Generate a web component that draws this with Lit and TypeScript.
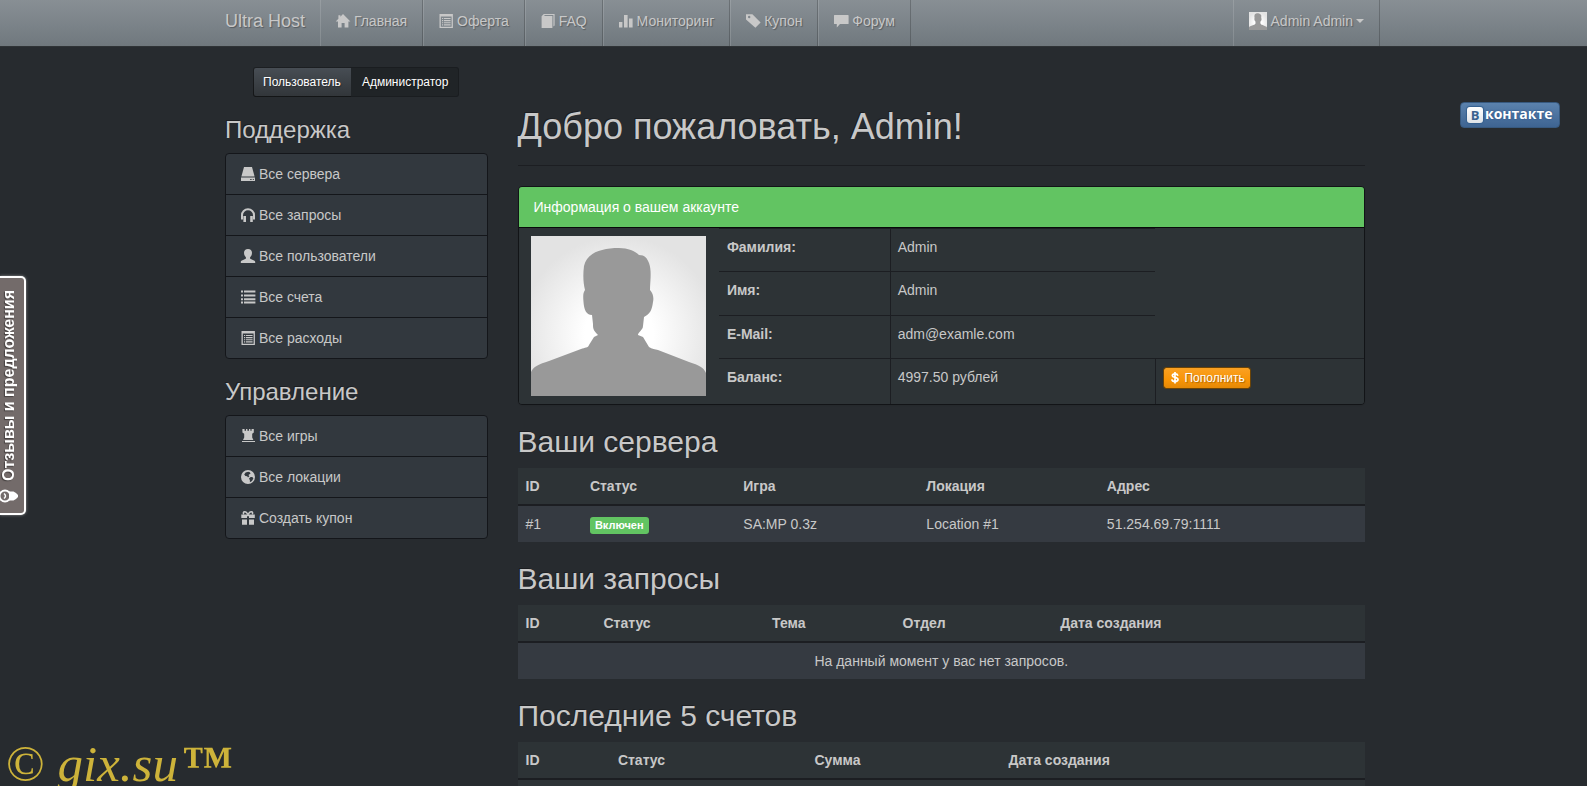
import { LitElement, html, css, svg, nothing } from "lit";
import { customElement, property } from "lit/decorators.js";

const GLYPHS: Record<string, unknown> = {
  home: svg`<path d="M7 0 14.4 7.4H12.4V13.6H8.6V9H5.6V13.6H2V7.4H-0.3L2.4 4.7V1.2H4.4V2.7Z"/>`,
  listAlt: svg`<path fill-rule="evenodd" d="M0.5 0H13.9V14H0.5ZM1.8 2.6V12.7H12.6V2.6Z"/><path d="M3 4H4.2V5.1H3ZM5 4H11.6V5.1H5ZM3 6.1H4.2V7.2H3ZM5 6.1H11.6V7.2H5ZM3 8.2H4.2V9.3H3ZM5 8.2H11.6V9.3H5ZM3 10.3H4.2V11.4H3ZM5 10.3H11.6V11.4H5Z"/>`,
  book: svg`<path d="M0.6 2.2 2.8 0H13.6V11.6L12.4 12.6V1H4L2.9 2H11.4V14H0.6Z"/>`,
  stats: svg`<path d="M0 8H3.4V13.6H0ZM5 1H8.6V13.6H5ZM10 4.6H13.6V13.6H10Z"/>`,
  tag: svg`<path fill-rule="evenodd" d="M0 0.3H6.4L14.6 8.4 9.4 13.7 0 5.6ZM3.2 1.8A1.2 1.2 0 1 0 3.2 4.2 1.2 1.2 0 0 0 3.2 1.8Z"/>`,
  comment: svg`<path d="M0.5 1H14Q14.6 1 14.6 1.6V9.4Q14.6 10 14 10H6L2.8 13.5V10H0.5Q0 10 0 9.4V1.6Q0 1 0.5 1Z"/>`,
  hdd: svg`<path d="M3 0H11L13.6 9.6H0.4Z"/><path fill-rule="evenodd" d="M0 10.6H14V14H0ZM9.2 12V13H10.6V12ZM11.8 12V13H12.8V12Z"/>`,
  headphones: svg`<path d="M2 11.5H0V7.2A7 7 0 0 1 14 7.2V11.5H12V7.2A5 5 0 0 0 2 7.2ZM2.4 8H5V14H2.4ZM9.2 8H11.8V14H9.2Z"/>`,
  user: svg`<path d="M7 0C9.500 0 11 1.600 11 3.800 11 5.800 10.300 7.200 9.100 8.200V9.400C10.300 10.600 14.200 11.200 14.200 12.800V14H-0.200V12.800C-0.200 11.200 3.700 10.600 4.900 9.400V8.200C3.700 7.200 3 5.800 3 3.800 3 1.600 4.500 0 7 0Z"/>`,
  list: svg`<path d="M0 0.6H2V2.6H0ZM3 0.6H14.4V2.6H3ZM0 4.5H2V6.5H0ZM3 4.5H14.4V6.5H3ZM0 8.3H2V10.3H0ZM3 8.3H14.4V10.3H3ZM0 11.6H2V13.6H0ZM3 11.6H14.4V13.6H3Z"/>`,
  tower: svg`<path d="M1.4 0H3.6V1.8H5V0H6.4V1.8H8V0H9.4V1.8H10.6V0H12.8V3.4L11.2 4.7V8.6L12.4 11H2L3.2 8.600V4.700L1.400 3.400ZM1 12H14V13.100H1Z"/>`,
  globe: svg`<path fill-rule="evenodd" d="M7 0A7 7 0 1 1 7 14 7 7 0 0 1 7 0ZM7.2 1.700 4.600 2.600 3.200 4.600 4.400 6.100 6.200 6.300 7 7.600 8.400 6.200 7.400 5 9.600 3.400 8.800 2.200ZM9.600 7 8 8.600 8.900 10.200V12.200L11 11 12.400 8.300 11.300 7Z"/>`,
  gift: svg`<path d="M0.3 3.6H13.8V7H8V5.300H6V7H0.300ZM1 8.500H6V13.800H1ZM8 8.500H13V13.800H8Z"/><path d="M6.900 3.700C5.800 1.300 4.700 0.800 3.700 0.800 2.200 0.800 1.900 2.400 3 3.200M7.100 3.700C8.200 1.300 9.300 0.800 10.300 0.800 11.800 0.800 12.100 2.400 11 3.200" fill="none" stroke="currentColor" stroke-width="1.5"/>`,
  usd: svg`<path d="M10.400 4.300C10 2.900 8.700 2.300 7 2.300 5 2.300 3.900 3.100 3.900 4.300 3.900 6.900 10.500 5.600 10.500 8.800 10.500 10.200 9 11.100 7 11.100 4.800 11.100 3.500 10.100 3.300 8.600M7 0V13.400" fill="none" stroke="currentColor" stroke-width="2"/>`,
};

@customElement("glyph-icon")
export class GlyphIcon extends LitElement {
  static styles = css`
    :host { display: inline-block; width: 14px; height: 14px; vertical-align: -2px; }
    svg { display: block; width: 100%; height: 100%; overflow: visible; fill: currentColor; }
  `;
  @property() name = "home";
  render() {
    return html`<svg viewBox="0 0 14 14" aria-hidden="true">${GLYPHS[this.name]}</svg>`;
  }
}

@customElement("user-avatar")
export class UserAvatar extends LitElement {
  static styles = css`
    :host { display: inline-block; }
    svg { display: block; width: 100%; height: 100%; }
  `;
  render() {
    return html`<svg viewBox="0 0 175 160" preserveAspectRatio="none" role="img" aria-label="Аватар">
      <defs><radialGradient id="g" gradientUnits="userSpaceOnUse" cx="88" cy="98" r="98">
        <stop offset="0.35" stop-color="#fff"/><stop offset="1" stop-color="#e3e3e3"/>
      </radialGradient></defs>
      <rect width="175" height="160" fill="url(#g)"/>
      <path fill="#999" d="M0 160V136C2 131 8 128 18 125L50 113C54 111.500 57 112 58 109L63 101 67 99C62 94 62 92 62 88L61 79C55 79 53 73 52.500 66 52 60 52 57 54 54 52 46 52 38 53 30 56 17 70 12 88 12 97 12 104 15 108 19 114 19 116 22 118 27 121 35 119 46 119 54 122 57 123 62 122 66 121 74 119 78 113 81L112 90C112 94 107 96 107 99L112 101 118 111C121 113 124 113 127 114L158 126C168 129 173 132 175 137V160Z"/>
    </svg>`;
  }
}

interface Column { title: string; width?: string; }
interface Listing { title: string; plain?: boolean; columns: Column[]; rows: unknown[][]; empty?: string; }

const NAV = [
  ["home", "Главная"], ["listAlt", "Оферта"], ["book", "FAQ"],
  ["stats", "Мониторинг"], ["tag", "Купон"], ["comment", "Форум"],
];

const MENUS = [
  { title: "Поддержка", items: [["hdd", "Все сервера"], ["headphones", "Все запросы"], ["user", "Все пользователи"], ["list", "Все счета"], ["listAlt", "Все расходы"]] },
  { title: "Управление", items: [["tower", "Все игры"], ["globe", "Все локации"], ["gift", "Создать купон"]] },
];

const LISTINGS: Listing[] = [
  {
    title: "Ваши сервера",
    columns: [{ title: "ID", width: "7.6%" }, { title: "Статус", width: "18.1%" }, { title: "Игра", width: "21.6%" }, { title: "Локация", width: "21.3%" }, { title: "Адрес" }],
    rows: [["#1", html`<span class="label">Включен</span>`, "SA:MP 0.3z", "Location #1", "51.254.69.79:1111"]],
  },
  {
    title: "Ваши запросы",
    columns: [{ title: "ID", width: "9.2%" }, { title: "Статус", width: "19.9%" }, { title: "Тема", width: "15.4%" }, { title: "Отдел", width: "18.6%" }, { title: "Дата создания" }],
    rows: [],
    empty: "На данный момент у вас нет запросов.",
  },
  {
    title: "Последние 5 счетов",
    plain: true,
    columns: [{ title: "ID", width: "10.9%" }, { title: "Статус", width: "23.2%" }, { title: "Сумма", width: "22.9%" }, { title: "Дата создания" }],
    rows: [["", "", "", ""]],
  },
];

@customElement("app-root")
export class AppRoot extends LitElement {
  static styles = css`
    :host {
      display: block; min-height: 100vh; box-sizing: border-box;
      background: #272b2f; color: #c8c8c8;
      font: 14px/20px "Liberation Sans", Arial, sans-serif;
    }
    *, *::before, *::after { box-sizing: border-box; }
    a { color: inherit; text-decoration: none; }
    h1, h2, h3 { margin: 0; font-weight: 400; text-shadow: -1px -1px 0 rgba(0, 0, 0, 0.3); }
    h1 { font-size: 36px; line-height: 40px; }
    h2 { font-size: 30px; line-height: 33px; margin-bottom: 10px; }
    h3 { font-size: 24px; line-height: 26px; margin: 20px 0 10px; }

    .navbar, .page { padding-left: 3px; }
    .container { max-width: 1170px; margin: 0 auto; }
    .navbar {
      background: linear-gradient(#888f94, #7a8288 58%, #70787d);
      border-bottom: 1px solid #2f3336;
      text-shadow: 1px 1px 1px rgba(0, 0, 0, 0.3);
    }
    .navbar .container { display: flex; }
    .brand { padding: 11px 15px 15px; font-size: 18px; }
    .nav { display: flex; flex: 1; margin: 0; padding: 0; list-style: none; }
    .nav a {
      display: block; padding: 11px 15px 15px; white-space: nowrap;
      border-left: 1px solid rgba(255, 255, 255, 0.13);
      border-right: 1px solid rgba(0, 0, 0, 0.2);
    }
    .nav .account { margin-left: auto; }
    .account a { display: flex; align-items: center; }
    .account user-avatar { width: 18px; height: 18px; margin-right: 4px; }
    .caret { margin-left: 3px; border: 4px solid transparent; border-top-color: currentColor; border-bottom: 0; }

    .columns { display: grid; grid-template-columns: 25% 75%; padding-top: 20px; }
    .sidebar, .main { padding: 0 15px; min-width: 0; }

    button {
      font: 12px/18px "Liberation Sans", Arial, sans-serif; color: #fff; margin: 0;
      border: 1px solid rgba(0, 0, 0, 0.6); cursor: pointer;
      text-shadow: 1px 1px 1px rgba(0, 0, 0, 0.3);
    }
    .switch { display: flex; padding-left: 28px; }
    .switch button { padding: 5px 10px 5px 9px; background: linear-gradient(#484e55, #3a3f44 60%, #313539) border-box; border-radius: 3px 0 0 3px; border-right: 0; }
    .switch .active { background: #202427; border-radius: 0 3px 3px 0; border: 1px solid #1a1d20; border-left: 0; padding: 5px 10px 5px 11px; }

    .menu { margin: 0; padding: 0; list-style: none; border: 1px solid #14161a; border-radius: 4px; background: #32383e; }
    .menu li + li { border-top: 1px solid #14161a; }
    .menu a { display: block; padding: 10px 15px; }

    .page-header { padding: 40px 0 18px; margin-bottom: 20px; border-bottom: 1px solid #1c1e22; }
    .panel { margin-bottom: 20px; border: 1px solid #121417; border-radius: 4px; background: #2d3336; overflow: hidden; box-shadow: 0 1px 1px rgba(0, 0, 0, 0.05); }
    .panel-heading { padding: 10px 15px; background: #62c462; color: #fff; border-bottom: 1px solid #080a0a; }

    table { width: 100%; border-spacing: 0; table-layout: fixed; }
    th, td { padding: 8px; text-align: left; vertical-align: top; }
    .info { background: #2d3336; }
    .info th, .info td { border-top: 1px solid #1c1e22; }
    .info .bare { border: 0; }
    .info .picture { text-align: center; padding: 8px 0; }
    .info .value { border-left: 1px solid #1c1e22; padding-left: 7px; }
    .info user-avatar { display: block; width: 175px; height: 160px; margin: 0 auto; }
    .c-picture { width: 23.7%; }
    .c-name { width: 20.2%; }
    .c-value { width: 31.4%; }
    .topup {
      display: block; padding: 1px 5px; border-radius: 3px; border-color: #6b4407;
      background: linear-gradient(#faa123, #f89406 60%, #e48806) padding-box;
    }
    .topup glyph-icon { width: 12px; height: 12px; }

    .listing { margin-bottom: 20px; background: #2d3336; }
    .listing th { border-bottom: 2px solid #1c1e22; }
    .listing tbody td { height: 36px; }
    .striped tbody { background: #353a41; }
    .listing .empty { text-align: center; }
    .label {
      display: inline-block; padding: 3px 5px; border-radius: 3px; background: #62c462; color: #fff;
      font-size: 11px; line-height: 11px; font-weight: 700; vertical-align: top; margin-top: 3px;
    }

    .vk {
      position: absolute; top: 102px; right: 27px; display: flex; align-items: center; gap: 2px;
      width: 100px; height: 26px; padding: 0 0 1px 6px; border: 1px solid #37597f; border-radius: 4px;
      background: linear-gradient(#5b82ad, #3e6492); color: #fff; overflow: hidden;
      font: 700 14px/20px "Open Sans", sans-serif; text-shadow: 0 0 2px #1d4a80;
    }
    .vk span { line-height: 20px; padding-bottom: 1px; }
    .vk .vk-mark {
      flex: none; width: 16px; height: 16px; padding: 0; border-radius: 3px; text-align: center; text-shadow: none;
      background: linear-gradient(#fff, #dfe3e8); color: #3a618f; font-size: 13px; line-height: 16px;
      box-shadow: 0 0 1px 1px #35608f;
    }
    .feedback {
      position: fixed; left: 0; top: 276px; width: 26px; height: 239px; padding: 0 7px 10px 0;
      display: flex; flex-direction: column; justify-content: flex-end; align-items: center; gap: 8px;
      background: #736b6a; border: 2px solid #fff; border-left: 0; border-radius: 0 5px 5px 0;
      color: #fff; box-shadow: 0 0 3px rgba(255, 255, 255, 0.5);
    }
    .feedback span {
      writing-mode: vertical-rl; transform: rotate(180deg); white-space: nowrap;
      font-size: 16px; line-height: 18px; font-weight: 700; text-shadow: -1px -1px 1px rgba(0, 0, 0, 0.4);
    }
    .feedback svg { flex: none; width: 18px; height: 14px; }
    .watermark {
      position: fixed; left: 6px; bottom: -8px; color: #cdb33a; white-space: nowrap;
      font: 51px/60px "Liberation Serif", "Times New Roman", serif;
    }
    .watermark b { padding-left: 4px; }
  `;

  private navbar() {
    return html`<nav class="navbar"><div class="container">
      <a class="brand" href="#">Ultra Host</a>
      <ul class="nav">
        ${NAV.map(([icon, text]) => html`<li><a href="#"><glyph-icon name=${icon}></glyph-icon> ${text}</a></li>`)}
        <li class="account"><a href="#"><user-avatar></user-avatar>Admin Admin<span class="caret"></span></a></li>
      </ul>
    </div></nav>`;
  }

  private sidebar() {
    return html`<aside class="sidebar">
      <div class="switch"><button type="button">Пользователь</button><button type="button" class="active" aria-pressed="true">Администратор</button></div>
      ${MENUS.map((menu) => html`<h3>${menu.title}</h3>
        <ul class="menu">${menu.items.map(([icon, text]) => html`<li><a href="#"><glyph-icon name=${icon}></glyph-icon> ${text}</a></li>`)}</ul>`)}
    </aside>`;
  }

  private account() {
    return html`<section class="panel">
      <div class="panel-heading">Информация о вашем аккаунте</div>
      <table class="info">
        <colgroup><col class="c-picture"><col class="c-name"><col class="c-value"><col></colgroup>
        <tbody>
          <tr><td class="bare picture" rowspan="4"><user-avatar></user-avatar></td><th scope="row">Фамилия:</th><td class="value">Admin</td><td class="bare" rowspan="3"></td></tr>
          <tr><th scope="row">Имя:</th><td class="value">Admin</td></tr>
          <tr><th scope="row">E-Mail:</th><td class="value">adm@examle.com</td></tr>
          <tr><th scope="row">Баланс:</th><td class="value">4997.50 рублей</td><td class="value"><button type="button" class="topup"><glyph-icon name="usd"></glyph-icon> Пополнить</button></td></tr>
        </tbody>
      </table>
    </section>`;
  }

  private listing(data: Listing) {
    return html`<section>
      <h2>${data.title}</h2>
      <table class="listing ${data.plain ? "" : "striped"}">
        <colgroup>${data.columns.map((c) => html`<col style=${c.width ? `width:${c.width}` : nothing}>`)}</colgroup>
        <thead><tr>${data.columns.map((c) => html`<th scope="col">${c.title}</th>`)}</tr></thead>
        <tbody>
          ${data.rows.map((row) => html`<tr>${row.map((cell) => html`<td>${cell}</td>`)}</tr>`)}
          ${data.empty ? html`<tr><td class="empty" colspan=${data.columns.length}>${data.empty}</td></tr>` : nothing}
        </tbody>
      </table>
    </section>`;
  }

  render() {
    return html`${this.navbar()}
      <div class="page"><div class="container columns">
        ${this.sidebar()}
        <main class="main">
          <header class="page-header"><h1>Добро пожаловать, Admin!</h1></header>
          ${this.account()}
          ${LISTINGS.map((l) => this.listing(l))}
        </main>
      </div></div>
      <a class="vk" href="#"><span class="vk-mark">В</span><span>контакте</span></a>
      <a class="feedback" href="#"><span>Отзывы и предложения</span>
        <svg viewBox="0 0 18 14" aria-hidden="true">
          <circle cx="5" cy="7" r="5.500" fill="none" stroke="#fff" stroke-width="2"/>
          <path d="M4 4.500Q7 7 4 9.500" fill="none" stroke="#fff" stroke-width="1.500"/>
          <path d="M9 2.500H13.500L16 4 18 6V8L16 10 13.500 11.500H9Z" fill="#fff"/>
        </svg></a>
      <div class="watermark">© <i>gix.su</i><b>™</b></div>`;
  }
}
